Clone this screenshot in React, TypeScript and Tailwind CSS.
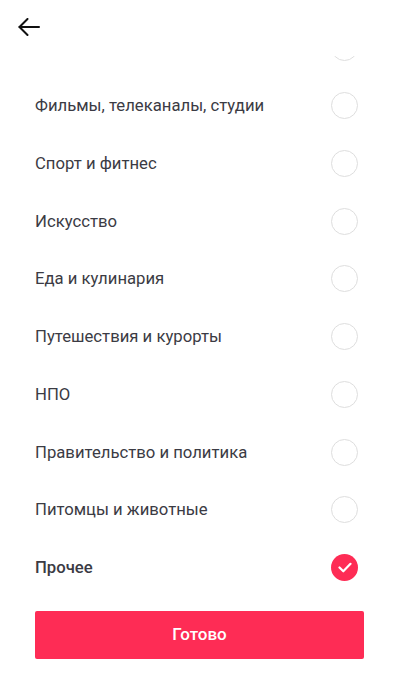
import { useState } from 'react'

const items = [
  'Бизнес, финансы',
  'Фильмы, телеканалы, студии',
  'Спорт и фитнес',
  'Искусство',
  'Еда и кулинария',
  'Путешествия и курорты',
  'НПО',
  'Правительство и политика',
  'Питомцы и животные',
  'Прочее',
]

export default function App() {
  const [selected, setSelected] = useState('Прочее')

  return (
    <div className="w-[399px] h-[682px] bg-white flex flex-col overflow-hidden" style={{ fontFamily: 'Roboto, "Noto Sans", sans-serif' }}>
      <div className="h-[56px] shrink-0 flex items-start pt-[16px] pl-[18px] relative z-10 bg-white">
        <button className="w-[22px] h-[22px] flex items-center justify-center">
          <svg width="22" height="18" viewBox="0 0 22 18" fill="none" stroke="#111" strokeWidth="2" strokeLinecap="round" strokeLinejoin="round">
            <path d="M21 9H1.5" />
            <path d="M9.5 1L1.5 9l8 8" />
          </svg>
        </button>
      </div>

      <div className="flex-1 overflow-hidden">
        <ul className="-mt-[37px]">
          {items.map((item) => {
            const on = selected === item
            return (
              <li
                key={item}
                onClick={() => setSelected(item)}
                className="h-[57.75px] flex items-center justify-between pl-[35px] pr-[41px] cursor-pointer"
              >
                <span className={`text-[16.7px] text-[#3b3b44] ${on ? 'font-medium' : ''}`}>{item}</span>
                {on ? (
                  <span className="w-[27px] h-[27px] rounded-full bg-[#fe2c55] flex items-center justify-center">
                    <svg width="14" height="11" viewBox="0 0 14 11" fill="none" stroke="white" strokeWidth="2.2" strokeLinecap="round" strokeLinejoin="round">
                      <path d="M1.5 5.5l3.8 3.8L12.5 1.8" />
                    </svg>
                  </span>
                ) : (
                  <span className="w-[27px] h-[27px] rounded-full border-[1.5px] border-[#dedede]" />
                )}
              </li>
            )
          })}
        </ul>
      </div>

      <div className="shrink-0 px-[35px] pb-[23px]">
        <button className="w-full h-[48px] rounded-[2px] bg-[#fe2c55] text-white text-[17px] font-medium">Готово</button>
      </div>
    </div>
  )
}
